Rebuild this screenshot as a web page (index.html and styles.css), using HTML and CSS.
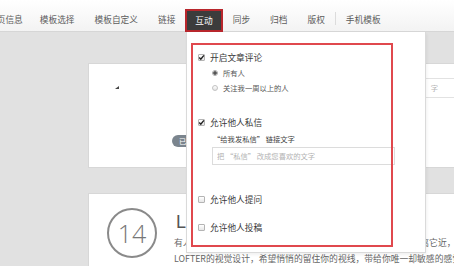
FILE: index.html
```html
<!DOCTYPE html>
<html lang="zh-CN">

<head>
    <meta charset="UTF-8">
    <meta name="viewport" content="width=device-width, initial-scale=1.0">
    <title>互动设置</title>
    <link rel="stylesheet" href="styles.css">
</head>

<body>
    <header class="topbar">
        <ul class="tabs">
            <li>主页信息</li>
            <li>模板选择</li>
            <li>模板自定义</li>
            <li>链接</li>
            <li class="active">互动</li>
            <li>同步</li>
            <li>归档</li>
            <li>版权</li>
            <li class="sep"></li>
            <li>手机模板</li>
        </ul>

        <!-- dropdown for 互动 -->
        <div class="dropdown">
            <div class="group">
                <label class="opt"><span class="box checked"><svg viewBox="0 0 7 7"><path d="M1.2 3.6 L2.8 5.2 L5.9 1.4" /></svg></span>开启文章评论</label>
                <div class="sub radios">
                    <label class="radio-row"><span class="radio on"></span>所有人</label>
                    <label class="radio-row"><span class="radio"></span>关注我一周以上的人</label>
                </div>
            </div>

            <div class="group group-msg">
                <label class="opt"><span class="box checked"><svg viewBox="0 0 7 7"><path d="M1.2 3.6 L2.8 5.2 L5.9 1.4" /></svg></span>允许他人私信</label>
                <div class="sub">
                    <p class="hint">“给我发私信” 链接文字</p>
                    <input type="text" class="text-input" placeholder="把 “私信” 改成您喜欢的文字">
                </div>
            </div>

            <div class="group group-ask">
                <label class="opt"><span class="box"></span>允许他人提问</label>
            </div>

            <div class="group group-post">
                <label class="opt"><span class="box"></span>允许他人投稿</label>
            </div>

            <!-- red annotation frame -->
            <div class="highlight"></div>
        </div>
    </header>

    <main class="content">
        <section class="card card-editor">
            <div class="editor-head">
                <span class="tick"></span>
                <div class="title-field"><span>字</span></div>
            </div>
            <div class="editor-foot">
                <span class="pill">已发布</span>
            </div>
        </section>

        <section class="card card-post">
            <div class="date-circle">14</div>
            <div class="post-body">
                <h2>LOFTER 2.0 全新上线</h2>
                <p>有人说，设计的好坏并不在于外表是否花哨，而在于你是否愿意离它近，因为它懂你。</p>
                <p>LOFTER的视觉设计，希望悄悄的留住你的视线，带给你唯一却敏感的感觉。</p>
            </div>
        </section>
    </main>
</body>

</html>
```

FILE: styles.css
```css
* {
    box-sizing: border-box;
}

body {
    margin: 0;
    width: 454px;
    height: 266px;
    overflow: hidden;
    background-color: #e1e1e1;
    font-family: "Noto Sans CJK SC", "Liberation Sans", sans-serif;
}

/* top navigation */
.topbar {
    position: relative;
    height: 32px;
    background: linear-gradient(#ffffff, #f3f3f3);
    border-bottom: 1px solid #d6d6d6;
    z-index: 2;
}

.tabs {
    display: flex;
    align-items: flex-end;
    height: 100%;
    margin: 0 0 0 -25px;
    padding: 0;
    list-style: none;
}

.tabs li {
    height: 22px;
    padding: 0 10px;
    font-size: 8.7px;
    line-height: 22px;
    color: #5c5c5c;
    white-space: nowrap;
}

.tabs li:first-child {
    padding-right: 7px;
    margin-left: 3px;
}

.tabs li.active {
    height: 23px;
    margin-bottom: -1px;
    padding: 0 8px;
    line-height: 19px;
    color: #fff;
    background-color: #3c3c3c;
    border: 2px solid #b8262c;
}

.tabs li.sep {
    width: 1px;
    height: 13px;
    margin-bottom: 6px;
    padding: 0;
    background-color: #dcdcdc;
}

/* dropdown panel */
.dropdown {
    position: absolute;
    top: 32px;
    left: 186px;
    width: 240px;
    height: 221px;
    padding: 19px 0 0 11px;
    background-color: #fff;
    border: 1px solid #dadada;
    border-top: none;
    box-shadow: 1px 2px 3px rgba(0, 0, 0, 0.06);
}

.opt {
    display: flex;
    align-items: center;
    height: 12px;
    font-size: 8.7px;
    color: #3a3a3a;
}

.box {
    position: relative;
    width: 7px;
    height: 7px;
    margin-right: 5px;
    border: 1px solid #b4b4b4;
    border-radius: 1px;
    background: linear-gradient(#ffffff, #e6e6e6);
}

.box svg {
    position: absolute;
    top: -1px;
    left: -1px;
    width: 7px;
    height: 7px;
}

.box svg path {
    fill: none;
    stroke: #222;
    stroke-width: 1.4;
}

.sub {
    padding-left: 14px;
    font-size: 7.3px;
    color: #555;
}

.radios {
    margin-top: 4px;
}

.radio-row {
    display: flex;
    align-items: center;
    height: 12px;
}

.radio-row + .radio-row {
    margin-top: 3px;
}

.radio {
    width: 6px;
    height: 6px;
    margin-right: 5px;
    border: 1px solid #c2c2c2;
    border-radius: 50%;
    background: linear-gradient(#ffffff, #e4e4e4);
}

.radio.on {
    background: radial-gradient(circle, #555 0 1.5px, #e8e8e8 2px);
    border-color: #aaa;
}

.group-msg {
    margin-top: 22px;
}

.hint {
    height: 12px;
    margin: 5px 0 2px 1px;
    line-height: 12px;
    color: #444;
}

.text-input {
    display: block;
    width: 183px;
    height: 18px;
    padding: 0 4px;
    border: 1px solid #dcdcdc;
    font-family: "Noto Sans CJK SC", sans-serif;
    font-size: 7.3px;
    color: #444;
    outline: none;
}

.text-input::placeholder {
    color: #b3b3b3;
}

.group-ask {
    margin-top: 28px;
}

.group-post {
    margin-top: 16px;
}

.highlight {
    position: absolute;
    top: 11px;
    left: 4px;
    width: 202px;
    height: 204px;
    border: 2px solid #e0484d;
    pointer-events: none;
}

/* page content behind */
.content {
    padding: 31px 0 0 88px;
}

.card {
    width: 400px;
    background-color: #fff;
    border: 1px solid #d7d7d7;
}

.card-editor {
    height: 105px;
    padding: 14px 0 0 24px;
}

.editor-head {
    display: flex;
    align-items: center;
    height: 20px;
}

.tick {
    width: 0;
    height: 0;
    margin: -2px 84px 0 2px;
    border-left: 4px solid transparent;
    border-bottom: 3px solid #444;
}

.title-field {
    display: flex;
    justify-content: flex-end;
    align-items: center;
    width: 260px;
    height: 20px;
    padding-right: 24px;
    border: 1px solid #e2e2e2;
    font-size: 7.3px;
    color: #b5b5b5;
}

.editor-foot {
    display: flex;
    margin: 37px 0 0 59px;
}

.pill {
    height: 12px;
    padding: 0 7px;
    border-radius: 6px;
    background-color: #7b858e;
    font-size: 7.3px;
    line-height: 12px;
    color: #fff;
}

.card-post {
    display: flex;
    align-items: flex-start;
    height: 100px;
    margin-top: 25px;
    padding: 14px 0 0 18px;
}

.date-circle {
    flex-shrink: 0;
    width: 50px;
    height: 50px;
    border: 2px solid #8a8a8a;
    border-radius: 50%;
    font-family: "Open Sans", "Liberation Sans", sans-serif;
    font-weight: 300;
    font-size: 25px;
    line-height: 46px;
    text-align: center;
    color: #777;
}

.post-body {
    margin-left: 17px;
    padding-top: 3px;
    white-space: nowrap;
}

.post-body h2 {
    margin: 0 0 0 2px;
    font-family: "Liberation Sans", sans-serif;
    font-weight: normal;
    font-size: 18px;
    line-height: 22px;
    color: #555;
}

.post-body p {
    margin: 0;
    font-size: 8.8px;
    line-height: 16px;
    color: #666;
}

.post-body h2 + p {
    margin-top: 2px;
}
```
